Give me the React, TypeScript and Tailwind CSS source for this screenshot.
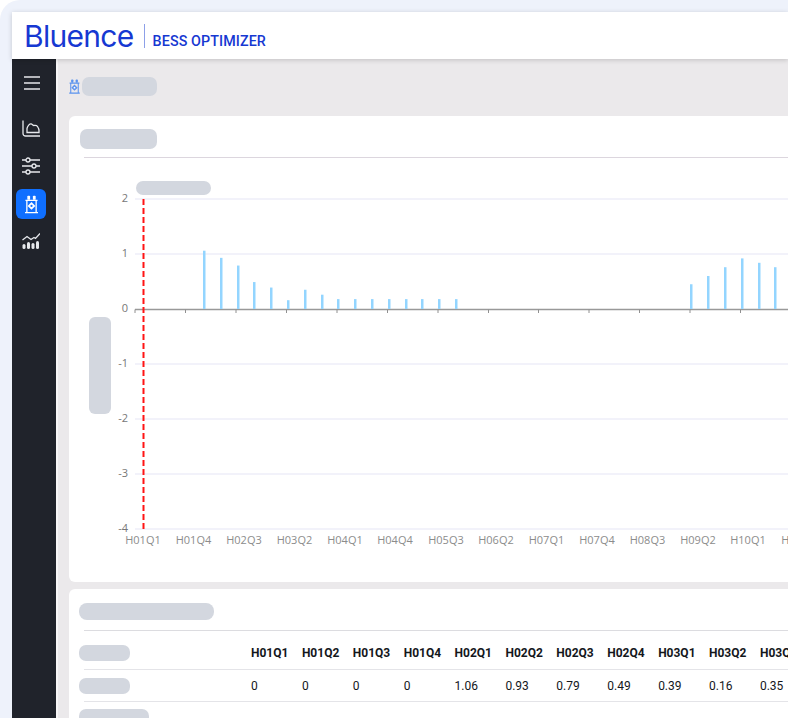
const bars = [
  [204, 1.06], [221, 0.93], [238, 0.79], [254, 0.49], [271, 0.39], [288, 0.16], [305, 0.35], [322, 0.26],
  [338, 0.18], [355, 0.18], [372, 0.18], [389, 0.18], [406, 0.18], [422, 0.18], [439, 0.18], [456, 0.18],
  [691, 0.45], [708, 0.6], [725, 0.76], [742, 0.92], [759, 0.84], [775, 0.76],
];
const xLabels = [
  [143, "H01Q1"], [193.5, "H01Q4"], [244, "H02Q3"], [294.5, "H03Q2"], [345, "H04Q1"], [395, "H04Q4"],
  [446, "H05Q3"], [496, "H06Q2"], [546.5, "H07Q1"], [597, "H07Q4"], [647.5, "H08Q3"], [698, "H09Q2"],
  [748, "H10Q1"], [799, "H10Q4"],
] as const;
const ticks = [135, 185.5, 236, 286.5, 337, 387.5, 438, 488.5, 538.5, 589, 639.5, 690, 740.5];
const yTicks = [2, 1, 0, -1, -2, -3, -4];
const yPos = (v: number) => 309 - v * 55;

const columns = ["H01Q1", "H01Q2", "H01Q3", "H01Q4", "H02Q1", "H02Q2", "H02Q3", "H02Q4", "H03Q1", "H03Q2", "H03Q3"];
const values = ["0", "0", "0", "0", "1.06", "0.93", "0.79", "0.49", "0.39", "0.16", "0.35"];

function Skeleton({ className }: { className: string }) {
  return <div className={`shrink-0 bg-[#d3d7df] ${className}`} />;
}

function TransformerIcon({ className, dot }: { className: string; dot: string }) {
  return (
    <svg viewBox="0 0 14 20" className={className} fill="none" stroke="currentColor" strokeWidth="1.4">
      <rect x="2.500" y="0.500" width="3" height="4.500" rx="1" fill="currentColor" stroke="none" />
      <rect x="8.500" y="0.500" width="3" height="4.500" rx="1" fill="currentColor" stroke="none" />
      <path d="M0.500 5.500h13M2 5.500v12.500M12 5.500v12.500M0 18.800h14" />
      <rect x="4" y="8.500" width="6" height="6" transform="rotate(45 7 11.500)" fill="currentColor" stroke="none" />
      <circle cx="7" cy="11.500" r="1.200" fill={dot} stroke="none" />
    </svg>
  );
}

function Sidebar() {
  return (
    <aside className="flex w-[44px] shrink-0 flex-col items-start bg-[#20232b] pl-[10px] text-[#e6e8ec]">
      <svg viewBox="0 0 16 14" className="ml-[2px] mt-[17px] h-[14px] w-[16px]" fill="none" stroke="currentColor" strokeWidth="1.500">
        <path d="M0 1h16M0 7h16M0 13h16" />
      </svg>
      <svg viewBox="0 0 18 17" className="mt-[30px] h-[17px] w-[18px]" fill="none" stroke="currentColor" strokeWidth="1.300">
        <path d="M1 0.500v13a2.500 2.500 0 0 0 2.500 2.500H18" />
        <path d="M5 12.500V8.500C5.500 6 7.500 3.500 9.500 4c1 .3 1.300 1.500 2.500 1.500s2.500-.5 3.500 1c.8 1.200 1.500 2.500 1.500 4v2z" />
      </svg>
      <svg viewBox="0 0 18 18" className="mt-[20px] h-[18px] w-[18px]" fill="none" stroke="currentColor" strokeWidth="1.300">
        <path d="M0 3h18M0 9h18M0 15h18" />
        <circle cx="6" cy="3" r="2" fill="#20232b" />
        <circle cx="12" cy="9" r="2" fill="#20232b" />
        <circle cx="6" cy="15" r="2" fill="#20232b" />
      </svg>
      <div className="ml-[-6px] mt-[14px] flex h-[30px] w-[30px] items-center justify-center rounded-[6px] bg-[#0f6fff] text-white">
        <TransformerIcon dot="#0f6fff" className="h-[19px] w-[13px]" />
      </div>
      <svg viewBox="0 0 18 16" className="mt-[14px] h-[16px] w-[18px]" fill="none" stroke="currentColor" strokeWidth="1.300">
        <path d="M0.500 7l4.500-3.500 4 3 3-2 1.500 1L18 0.500" />
        <rect x="0.500" y="11" width="3" height="5" rx="1.500" fill="currentColor" stroke="none" />
        <rect x="5" y="9" width="3" height="7" rx="1.500" fill="currentColor" stroke="none" />
        <rect x="9.500" y="10" width="3" height="6" rx="1.500" fill="currentColor" stroke="none" />
        <rect x="14" y="8" width="3" height="8" rx="1.500" fill="currentColor" stroke="none" />
      </svg>
    </aside>
  );
}

function Chart() {
  return (
    <svg viewBox="111 170 677 391" className="h-[391px] w-[677px] shrink-0 font-['Open_Sans',sans-serif]">
      {yTicks.map((v) => (
        <g key={v}>
          {v !== 0 && <line x1={135} x2={788} y1={yPos(v)} y2={yPos(v)} stroke="#eeeef8" strokeWidth="1.500" />}
          <text x={128} y={yPos(v) + 3} textAnchor="end" fontSize="11" fill="#777777">{v}</text>
        </g>
      ))}
      <line x1={135} x2={788} y1={309.500} y2={309.500} stroke="#999999" strokeWidth="1.500" />
      {ticks.map((x) => (
        <line key={x} x1={x} x2={x} y1={309.500} y2={313} stroke="#909090" strokeWidth="1" />
      ))}
      {bars.map(([x, v]) => (
        <rect key={x} x={x - 1} y={yPos(v)} width="2.500" height={v * 55} fill="#93d5ff" />
      ))}
      <line x1={143.500} x2={143.500} y1={199} y2={530} stroke="#ff1414" strokeWidth="2" strokeDasharray="6 3" />
      {xLabels.map(([x, label]) => (
        <text key={label} x={x} y={544} textAnchor="middle" fontSize="11" fill="#8c8c8c">{label}</text>
      ))}
    </svg>
  );
}

function DataRow({ cells, className, bold }: { cells: string[]; className: string; bold?: boolean }) {
  return (
    <div className={`flex items-center ${className}`}>
      {cells.map((c, i) => (
        <div key={i} className={`w-[50.9px] shrink-0 text-[12px] text-[#14171c] ${bold ? "font-bold" : ""}`}>{c}</div>
      ))}
    </div>
  );
}

export default function App() {
  return (
    <div className="h-[718px] w-[788px] overflow-hidden bg-white font-['Roboto',sans-serif]">
      <div className="flex h-full flex-col rounded-tl-[20px] bg-[#eef2fb] pl-3 pt-3">
        <header className="relative z-10 flex h-[47px] shrink-0 items-center bg-white pl-[12px] shadow-[0_1px_5px_rgba(0,0,0,0.18)]">
          <span className="font-['Inter',sans-serif] text-[30px] leading-none font-normal tracking-[-0.7px] text-[#1638d2]">Bluence</span>
          <div className="ml-[10px] h-[24px] w-px bg-[#8da0e8]" />
          <span className="ml-[8px] mt-[11px] text-[14.300px] leading-none font-medium tracking-[0.1px] text-[#1638d2]">BESS OPTIMIZER</span>
        </header>
        <div className="flex min-h-0 flex-1">
          <Sidebar />
          <main className="min-w-0 flex-1 border-l-2 border-[#f7f6f7] bg-[#ebe9eb] pl-[11px]">
            <div className="flex h-[53px] items-center pt-[1px]">
              <TransformerIcon dot="#ffffff" className="h-[15px] w-[11px] text-[#5b93ee]" />
              <Skeleton className="ml-[2px] h-[19px] w-[75px] rounded-[7px]" />
            </div>
            <section className="mt-[4px] w-[760px] rounded-l-[6px] bg-white pl-[11px] pt-[13px]">
              <Skeleton className="h-[20px] w-[77px] rounded-[7px]" />
              <div className="ml-[4px] mt-[8px] h-px bg-[#dcd6de]" />
              <div className="relative mt-[12px] flex items-center pb-[21px]">
                <Skeleton className="ml-[9px] h-[97px] w-[22px] rounded-[6px]" />
                <Chart />
                <Skeleton className="absolute left-[56px] top-[11px] h-[14px] w-[75px] rounded-[7px]" />
              </div>
            </section>
            <section className="mt-[7px] w-[760px] rounded-l-[6px] bg-white pl-[10px] pt-[14px]">
              <Skeleton className="h-[17px] w-[135px] rounded-[8px]" />
              <div className="ml-[5px] mt-[10px] h-px bg-[#dcdce0]" />
              <div className="flex h-[38px] items-center pt-[5px]">
                <Skeleton className="mr-[121px] h-[16px] w-[51px] rounded-[7px]" />
                <DataRow cells={columns} bold className="" />
              </div>
              <div className="ml-[5px] h-px bg-[#e4e4e8]" />
              <div className="flex h-[31px] items-center">
                <Skeleton className="mr-[121px] h-[16px] w-[51px] rounded-[7px]" />
                <DataRow cells={values} className="" />
              </div>
              <div className="ml-[5px] h-px bg-[#e4e4e8]" />
              <div className="flex pt-[7px]">
                <Skeleton className="mr-[102px] h-[16px] w-[70px] rounded-[7px]" />
                <DataRow cells={values} className="mt-[9px]" />
              </div>
            </section>
          </main>
        </div>
      </div>
    </div>
  );
}
